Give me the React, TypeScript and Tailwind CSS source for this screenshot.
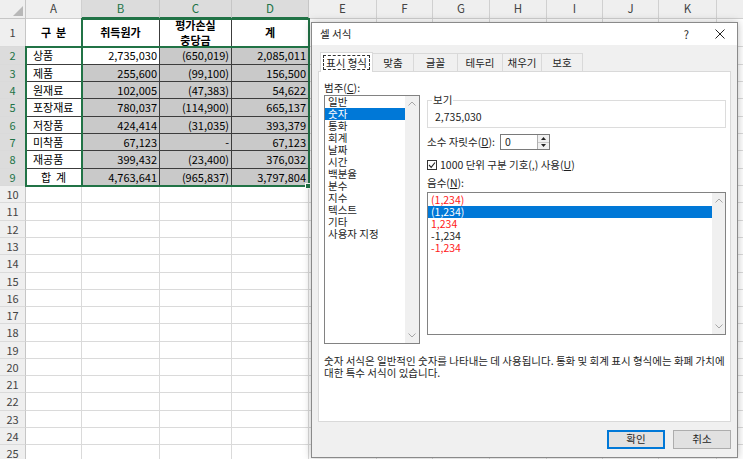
import React from "react";

const colW = [
  "w-[26px]", "w-[56px]", "w-[78px]", "w-[72px]", "w-[77px]", "w-[68px]", "w-[56px]",
  "w-[57px]", "w-[57px]", "w-[56px]", "w-[56px]", "w-[58px]", "w-[58px]",
];
const letters = ["A", "B", "C", "D", "E", "F", "G", "H", "I", "J", "K", "L"];

// rows 2..25, heights follow the on-screen grid (17.3px average)
const rowH = [
  18, 17, 17, 18, 17, 17, 18, 17,
  17, 18, 17, 17, 18, 17, 17, 17, 18, 17, 17, 17, 18, 17, 17, 17,
];

const data = [
  ["상품", "2,735,030", "(650,019)", "2,085,011"],
  ["제품", "255,600", "(99,100)", "156,500"],
  ["원재료", "102,005", "(47,383)", "54,622"],
  ["포장재료", "780,037", "(114,900)", "665,137"],
  ["저장품", "424,414", "(31,035)", "393,379"],
  ["미착품", "67,123", "-", "67,123"],
  ["재공품", "399,432", "(23,400)", "376,032"],
  ["합 계", "4,763,641", "(965,837)", "3,797,804"],
];

const categories = ["일반", "숫자", "통화", "회계", "날짜", "시간", "백분율", "분수", "지수", "텍스트", "기타", "사용자 지정"];

function ChevUp() {
  return (
    <svg width="8" height="5" viewBox="0 0 8 5">
      <path d="M0.5 4.5L4 1L7.5 4.5" stroke="#a6a6a6" fill="none" />
    </svg>
  );
}

function ChevDown() {
  return (
    <svg width="8" height="5" viewBox="0 0 8 5">
      <path d="M0.5 0.5L4 4L7.5 0.5" stroke="#a6a6a6" fill="none" />
    </svg>
  );
}

function Scrollbar({ w }: { w: string }) {
  return (
    <div className={`${w} h-full bg-[#f0f0f0] flex flex-col items-center justify-between py-[5px]`}>
      <ChevUp />
      <ChevDown />
    </div>
  );
}

function HeaderRow() {
  return (
    <div className="flex h-[19px]">
      <div className={`${colW[0]} shrink-0 relative bg-[#efefef] border-r border-b border-[#c6c6c6]`}>
        <svg className="absolute right-[2px] bottom-[2px]" width="10" height="10" viewBox="0 0 10 10">
          <polygon points="10,0 10,10 0,10" fill="#b8b8b8" />
        </svg>
      </div>
      {letters.map((l, i) => {
        const sel = i >= 1 && i <= 3;
        return (
          <div
            key={l}
            className={`${colW[i + 1]} shrink-0 flex items-center justify-center border-r text-[11.5px] ${
              sel
                ? "bg-[#dcdcdc] text-[#217346] border-r-[#c6c6c6] border-b-2 border-b-[#217346]"
                : "bg-[#efefef] text-[#444] border-b border-[#d0d0d0]"
            }`}
          >
            {l}
          </div>
        );
      })}
    </div>
  );
}

function EmptyCells({ from }: { from: number }) {
  return (
    <>
      {colW.slice(from).map((w, i) => (
        <div key={i} className={`${w} shrink-0 border-r border-b border-[#dadada]`} />
      ))}
    </>
  );
}

function TitleRow() {
  const cell = "shrink-0 flex items-center justify-center border-r border-b border-[#3c3c3c] font-bold text-[11px] text-black";
  return (
    <div className="flex h-[28px]">
      <div className={`${colW[0]} shrink-0 flex items-center justify-center bg-[#efefef] text-[#444] text-[11px] border-r border-b border-[#c6c6c6] border-b-[#dadada]`}>
        1
      </div>
      <div className={`${colW[1]} ${cell}`}>구&nbsp;&nbsp;분</div>
      <div className={`${colW[2]} ${cell}`}>취득원가</div>
      <div className={`${colW[3]} ${cell} flex-col leading-[15px]`}>
        <span>평가손실</span>
        <span>충당금</span>
      </div>
      <div className={`${colW[4]} ${cell}`}>계</div>
      <EmptyCells from={5} />
    </div>
  );
}

function Row({ n, h }: { n: number; h: number }) {
  const sel = n >= 2 && n <= 9;
  const d = sel ? data[n - 2] : null;
  const hc = h === 18 ? "h-[18px]" : "h-[17px]";
  return (
    <div className={`flex ${hc}`}>
      <div
        className={`${colW[0]} shrink-0 flex items-center justify-center text-[11px] border-r border-b border-[#c6c6c6] border-b-[#dadada] ${
          sel ? "bg-[#dcdcdc] text-[#217346]" : "bg-[#efefef] text-[#444]"
        }`}
      >
        {n}
      </div>
      {d ? (
        <>
          <div
            className={`${colW[1]} shrink-0 flex items-center border-r border-b border-[#3c3c3c] text-[11px] text-black bg-white ${
              n === 9 ? "justify-center" : "pl-[7px]"
            }`}
          >
            {n === 9 ? <span>합&nbsp;&nbsp;계</span> : d[0]}
          </div>
          {[1, 2, 3].map((c) => (
            <div
              key={c}
              className={`${colW[c + 1]} shrink-0 flex items-center justify-end pr-[2px] border-r border-b border-[#3c3c3c] text-[11px] text-black ${
                n === 2 && c === 1 ? "bg-white" : "bg-[#c9c9c9]"
              }`}
            >
              {d[c]}
            </div>
          ))}
          <EmptyCells from={5} />
        </>
      ) : (
        <EmptyCells from={1} />
      )}
    </div>
  );
}

function Sheet() {
  return (
    <div className="flex flex-col">
      <HeaderRow />
      <TitleRow />
      {rowH.map((h, i) => (
        <Row key={i} n={i + 2} h={h} />
      ))}
    </div>
  );
}

function Selection() {
  return (
    <>
      <div className="absolute left-[25px] top-[46px] w-[58px] h-[141px] border-2 border-[#217346]" />
      <div className="absolute left-[81px] top-[18px] w-[229px] h-[30px] border-2 border-[#217346]" />
      <div className="absolute left-[81px] top-[46px] w-[229px] h-[141px] border-2 border-[#217346]" />
      <div className="absolute left-[305px] top-[183px] w-[6px] h-[6px] bg-[#217346] border border-white" />
    </>
  );
}

function Tab({ w, label, active }: { w: string; label: string; active?: boolean }) {
  return active ? (
    <div className={`${w} relative z-10 -mb-px h-[20px] -mt-[2px] bg-white border border-b-0 border-[#d9d9d9] flex items-center justify-center`}>
      <span className="border border-dashed border-[#333] px-[2px] leading-[13px]">{label}</span>
    </div>
  ) : (
    <div className={`${w} h-[18px] bg-[#f0f0f0] border border-b-0 border-l-0 border-[#d9d9d9] flex items-center justify-center`}>
      {label}
    </div>
  );
}

function Dialog() {
  return (
    <div className="absolute left-[311px] top-[22px] w-[427px] border border-[#8a8a8a] bg-[#f0f0f0] shadow-[0_0_8px_rgba(0,0,0,0.25)] flex flex-col text-[10.5px] text-[#1e1e1e]">
      <div className="h-[22px] bg-white flex items-center pl-[8px] pr-[12px]">
        <span>셀 서식</span>
        <span className="ml-auto mr-[26px] text-[11px]">?</span>
        <svg width="10" height="10" viewBox="0 0 10 10">
          <path d="M0.5 0.5L9.5 9.5M9.5 0.5L0.5 9.5" stroke="#222" strokeWidth="1" />
        </svg>
      </div>

      <div className="px-[6px] pt-[8px] pb-[8px] flex flex-col">
        <div className="flex items-end pl-[2px] h-[18px]">
          <Tab w="w-[53px]" label="표시 형식" active />
          <Tab w="w-[41px]" label="맞춤" />
          <Tab w="w-[44px]" label="글꼴" />
          <Tab w="w-[45px]" label="테두리" />
          <Tab w="w-[39px]" label="채우기" />
          <Tab w="w-[41px]" label="보호" />
        </div>

        <div className="h-[351px] bg-white border border-[#d9d9d9] pl-[5px] pt-[9px] flex flex-col">
          <div className="flex">
            <div className="w-[96px] flex flex-col">
              <div className="h-[14px] leading-[14px]">
                범주(<span className="underline">C</span>):
              </div>
              <div className="h-[249px] border border-[#828282] flex">
                <div className="flex-1 flex flex-col">
                  {categories.map((c, i) => (
                    <div
                      key={c}
                      className={`h-[12px] leading-[12px] pl-[3px] ${i === 1 ? "bg-[#0078d7] text-white" : ""}`}
                    >
                      {c}
                    </div>
                  ))}
                </div>
                <Scrollbar w="w-[14px]" />
              </div>
            </div>

            <div className="w-[299px] ml-[7px] flex flex-col">
              <fieldset className="mt-[13px] h-[34px] border border-[#dcdcdc] px-[6px]">
                <legend className="px-[1px] ml-[-2px] leading-[12px]">보기</legend>
                <div className="pt-[5px] pl-[1px] leading-[12px]">2,735,030</div>
              </fieldset>

              <div className="mt-[6px] flex items-center h-[16px]">
                <span className="w-[73px]">
                  소수 자릿수(<span className="underline">D</span>):
                </span>
                <div className="w-[50px] h-[16px] border border-[#7a7a7a] flex bg-white">
                  <span className="flex-1 pl-[4px] leading-[14px]">0</span>
                  <div className="w-[12px] flex flex-col border-l border-[#b0b0b0] bg-[#f0f0f0]">
                    <div className="flex-1 flex items-center justify-center border-b border-[#c8c8c8]">
                      <svg width="5" height="3" viewBox="0 0 5 3">
                        <polygon points="2.5,0 5,3 0,3" fill="#222" />
                      </svg>
                    </div>
                    <div className="flex-1 flex items-center justify-center">
                      <svg width="5" height="3" viewBox="0 0 5 3">
                        <polygon points="0,0 5,0 2.5,3" fill="#222" />
                      </svg>
                    </div>
                  </div>
                </div>
              </div>

              <div className="mt-[8px] flex items-center h-[13px]">
                <div className="w-[10px] h-[10px] border border-[#333] bg-white flex items-center justify-center">
                  <svg width="8" height="8" viewBox="0 0 8 8">
                    <path d="M1 4L3.2 6.3L7 1.5" stroke="#222" strokeWidth="1.1" fill="none" />
                  </svg>
                </div>
                <span className="ml-[3px]">
                  1000 단위 구분 기호(,) 사용(<span className="underline">U</span>)
                </span>
              </div>

              <div className="mt-[6px] h-[12px] leading-[12px]">
                음수(<span className="underline">N</span>):
              </div>

              <div className="mt-[3px] h-[143px] border border-[#828282] flex">
                <div className="flex-1 flex flex-col pt-[1px]">
                  <div className="h-[12px] leading-[12px] pl-[3px] text-[#ff2020]">(1,234)</div>
                  <div className="h-[12px] leading-[12px] pl-[3px] bg-[#0078d7] text-white">(1,234)</div>
                  <div className="h-[12px] leading-[12px] pl-[3px] text-[#ff2020]">1,234</div>
                  <div className="h-[12px] leading-[12px] pl-[3px]">-1,234</div>
                  <div className="h-[12px] leading-[12px] pl-[3px] text-[#ff2020]">-1,234</div>
                </div>
                <Scrollbar w="w-[13px]" />
              </div>
            </div>
          </div>

          <div className="mt-[11px] leading-[12px]">
            <div>숫자 서식은 일반적인 숫자를 나타내는 데 사용됩니다. 통화 및 회계 표시 형식에는 화폐 가치에</div>
            <div>대한 특수 서식이 있습니다.</div>
          </div>
        </div>

        <div className="mt-[8px] flex justify-end gap-[8px]">
          <button className="w-[58px] h-[19px] bg-[#e1e1e1] border border-[#0078d7] outline outline-1 -outline-offset-2 outline-[#0078d7] leading-none">
            확인
          </button>
          <button className="w-[58px] h-[19px] bg-[#e1e1e1] border border-[#adadad] leading-none">
            취소
          </button>
        </div>
      </div>
    </div>
  );
}

export default function App() {
  return (
    <div className="relative w-[743px] h-[459px] overflow-hidden bg-white font-['Noto_Sans_CJK_KR',sans-serif]">
      <Sheet />
      <Selection />
      <Dialog />
    </div>
  );
}
